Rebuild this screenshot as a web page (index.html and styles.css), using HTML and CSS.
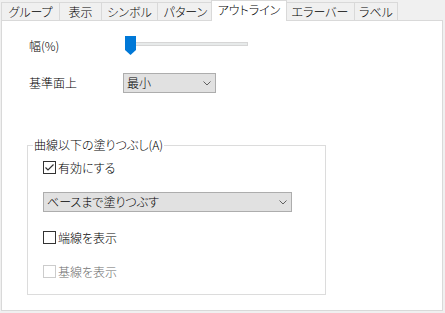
FILE: index.html
```html
<!DOCTYPE html>
<html lang="ja">
<head>
    <meta charset="UTF-8">
    <title>アウトライン</title>
    <link rel="stylesheet" href="styles.css">
</head>
<body>
    <div class="dialog">
        <div class="tabs">
            <div class="tab tab-group">グループ</div>
            <div class="tab tab-view">表示</div>
            <div class="tab tab-symbol">シンボル</div>
            <div class="tab tab-pattern">パターン</div>
            <div class="tab tab-outline active">アウトライン</div>
            <div class="tab tab-error">エラーバー</div>
            <div class="tab tab-label">ラベル</div>
        </div>

        <div class="panel">
            <div class="row row-width">
                <span class="label">幅(%)</span>
                <div class="slider">
                    <div class="track"></div>
                    <svg class="thumb" width="11" height="19" viewBox="0 0 11 19">
                        <polygon points="0,0 11,0 11,14 5.5,19 0,14" fill="#0078d7"/>
                    </svg>
                </div>
            </div>

            <div class="row row-base">
                <span class="label">基準面上</span>
                <div class="select select-small">
                    <span>最小</span>
                    <svg class="chev" width="8" height="5" viewBox="0 0 8 5">
                        <polyline points="0.5,0.5 4,4 7.5,0.5" fill="none" stroke="#606060" stroke-width="1"/>
                    </svg>
                </div>
            </div>

            <fieldset class="group">
                <legend>曲線以下の塗りつぶし(A)</legend>

                <div class="check">
                    <svg class="box" width="13" height="13" viewBox="0 0 13 13">
                        <rect x="0.5" y="0.5" width="12" height="12" fill="#fff" stroke="#333"/>
                        <polyline points="2.5,6.5 5,9 10.5,3.5" fill="none" stroke="#333" stroke-width="1.2"/>
                    </svg>
                    <span>有効にする</span>
                </div>

                <div class="select select-wide">
                    <span>ベースまで塗りつぶす</span>
                    <svg class="chev" width="8" height="5" viewBox="0 0 8 5">
                        <polyline points="0.5,0.5 4,4 7.5,0.5" fill="none" stroke="#606060" stroke-width="1"/>
                    </svg>
                </div>

                <div class="check spaced">
                    <svg class="box" width="13" height="13" viewBox="0 0 13 13">
                        <rect x="0.5" y="0.5" width="12" height="12" fill="#fff" stroke="#333"/>
                    </svg>
                    <span>端線を表示</span>
                </div>

                <div class="check spaced disabled">
                    <svg class="box" width="13" height="13" viewBox="0 0 13 13">
                        <rect x="0.5" y="0.5" width="12" height="12" fill="#fff" stroke="#ccc"/>
                    </svg>
                    <span>基線を表示</span>
                </div>
            </fieldset>
        </div>
    </div>
</body>
</html>
```

FILE: styles.css
```css
body {
    margin: 0;
    background: #f0f0f0;
    font-family: "Noto Sans CJK JP", "DejaVu Sans", sans-serif;
    font-size: 12px;
    font-weight: 300;
    line-height: 16px;
    font-feature-settings: "palt";
    color: #000;
    width: 445px;
    height: 313px;
    overflow: hidden;
}

.dialog {
    margin-left: 1px;
}

/* tab strip */
.tabs {
    display: flex;
    align-items: flex-end;
    height: 20px;
    position: relative;
    z-index: 1;
}

.tab {
    box-sizing: border-box;
    height: 18px;
    border: 1px solid #d9d9d9;
    border-bottom: none;
    background: #f0f0f0;
    margin-right: -1px;
    text-align: center;
    line-height: 17px;
    white-space: nowrap;
}

.tab.active {
    height: 21px;
    margin: 0 -2px -1px -2px;
    background: #fff;
    line-height: 17px;
    position: relative;
    z-index: 2;
}

.tab-group { width: 59px; }
.tab-view { width: 43px; }
.tab-symbol { width: 57px; }
.tab-pattern { width: 57px; }
.tab-outline { width: 76px; }
.tab-error { width: 70px; }
.tab-label { width: 44px; }

/* page */
.panel {
    box-sizing: border-box;
    width: 442px;
    height: 291px;
    background: #fff;
    border: 1px solid #d9d9d9;
    padding-left: 27px;
}

.row {
    display: flex;
    align-items: center;
}

.row-width {
    margin-top: 15px;
    height: 19px;
}

.row-base {
    margin-top: 18px;
    height: 20px;
}

.label {
    width: 94px;
}

.slider {
    position: relative;
    width: 123px;
    height: 19px;
    margin-left: 2px;
}

.track {
    box-sizing: border-box;
    margin: 6px 0 0 3px;
    width: 120px;
    height: 4px;
    background: #e7eaea;
    border: 1px solid #d6d6d6;
}

.thumb {
    position: absolute;
    left: 0;
    top: 0;
}

.select {
    box-sizing: border-box;
    display: flex;
    align-items: center;
    justify-content: space-between;
    height: 20px;
    padding: 0 4px 0 3px;
    background: #e1e1e1;
    border: 1px solid #adadad;
}

.select-small {
    width: 93px;
}

.select-wide {
    width: 249px;
    margin-top: 16px;
}

.chev {
    display: block;
}

/* group box */
.group {
    box-sizing: border-box;
    margin: 44px 0 0 -2px;
    width: 299px;
    padding: 6px 0 14px 15px;
    border: 1px solid #dcdcdc;
}

.group legend {
    margin-left: -10px;
    padding: 0 1px;
    line-height: 16px;
}

.check {
    display: flex;
    align-items: center;
    gap: 2px;
    height: 17px;
}

.check.spaced {
    margin-top: 17px;
}

.check .box {
    display: block;
}

.check.disabled {
    color: #6d6d6d;
}
```
